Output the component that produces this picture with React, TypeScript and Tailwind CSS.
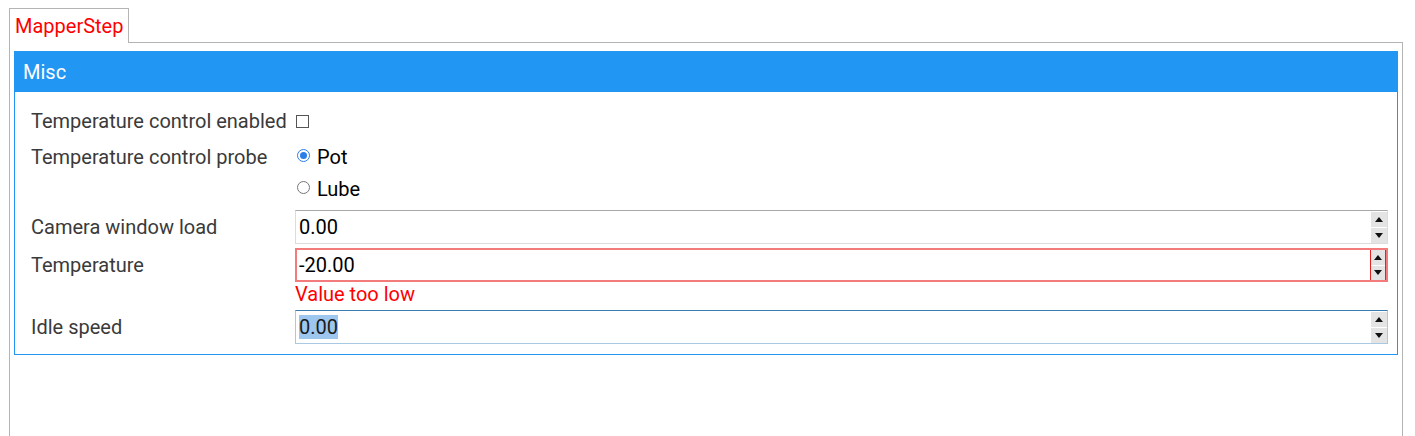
import React from "react";

function Spinner({ invalid }: { invalid?: boolean }) {
    return (
        <div
            className={`flex flex-col justify-center gap-[1px] w-[16px] shrink-0 ${
                invalid ? "border-l border-r border-[#e02424] self-stretch" : ""
            }`}
        >
            <div className="h-[15px] bg-[#e4e4e4] flex items-center justify-center">
                <svg width="8" height="5" viewBox="0 0 8 5">
                    <path d="M0 5 L4 0 L8 5 Z" fill="#111" />
                </svg>
            </div>
            <div className="h-[15px] bg-[#e4e4e4] flex items-center justify-center">
                <svg width="8" height="5" viewBox="0 0 8 5">
                    <path d="M0 0 L8 0 L4 5 Z" fill="#111" />
                </svg>
            </div>
        </div>
    );
}

function NumberField({
    value,
    state,
}: {
    value: string;
    state?: "normal" | "invalid" | "focus";
}) {
    const box =
        state === "invalid"
            ? "border-2 border-[#f47b7b] pl-[2px]"
            : state === "focus"
            ? "border border-[#a9c8e2] border-t-[#3b7cb0] pl-[3px]"
            : "border border-[#dcdcdc] border-t-[#a9a9a9] pl-[3px]";
    return (
        <div className={`flex items-center h-[34px] flex-1 ${box}`}>
            <div className="flex-1 text-[20px] leading-[24px] text-black">
                {state === "focus" ? (
                    <span className="bg-[#9dc7ee] text-[#1a1a1a]">{value}</span>
                ) : (
                    value
                )}
            </div>
            <Spinner invalid={state === "invalid"} />
        </div>
    );
}

export default function App() {
    return (
        <div
            className="pt-[8px] pl-[9px] pr-[12px] bg-white min-h-[436px]"
            style={{ fontFamily: "Roboto, 'Liberation Sans', sans-serif" }}
        >
            <div className="flex">
                <div className="h-[35px] border border-b-0 border-[#b4b4b4] px-[5px] flex items-center text-[20px] text-[#ff0000] bg-white relative z-10 mb-[-1px]">
                    MapperStep
                </div>
            </div>
            <div className="border border-b-0 border-[#b4b4b4] pt-[8px] px-[4px] min-h-[400px]">
                <div className="border border-[#2196f3] border-t-0">
                    <div className="h-[41px] bg-[#2196f3] text-white text-[20px] flex items-center pl-[9px] mx-[-1px]">
                        Misc
                    </div>
                    <div className="pt-[13px] pb-[10px] pl-[16px] pr-[9px] flex flex-col gap-[4px] text-[20px] leading-[24px] text-[#3a3a3a]">
                        <div className="flex items-center h-[32px]">
                            <span className="w-[264px] shrink-0">Temperature control enabled</span>
                            <span className="w-[13px] h-[13px] border border-[#555] ml-[1px] bg-white" />
                        </div>
                        <div className="flex mb-[1px]">
                            <span className="w-[264px] shrink-0 h-[32px] flex items-center">
                                Temperature control probe
                            </span>
                            <div className="flex flex-col text-black">
                                <div className="h-[32px] flex items-center gap-[7px] pl-[2px]">
                                    <span className="w-[13px] h-[13px] rounded-full border-[1.5px] border-[#2b7de9] flex items-center justify-center mt-[-4px]">
                                        <span className="w-[7px] h-[7px] rounded-full bg-[#2b7de9]" />
                                    </span>
                                    <span>Pot</span>
                                </div>
                                <div className="h-[32px] flex items-center gap-[7px] pl-[2px]">
                                    <span className="w-[13px] h-[13px] rounded-full border border-[#767676] mt-[-4px]" />
                                    <span>Lube</span>
                                </div>
                            </div>
                        </div>
                        <div className="flex items-center">
                            <span className="w-[264px] shrink-0">Camera window load</span>
                            <NumberField value="0.00" />
                        </div>
                        <div className="flex flex-col">
                            <div className="flex items-center">
                                <span className="w-[264px] shrink-0">Temperature</span>
                                <NumberField value="-20.00" state="invalid" />
                            </div>
                            <div className="pl-[264px] text-[#ff0000] leading-[24px]">
                                Value too low
                            </div>
                        </div>
                        <div className="flex items-center">
                            <span className="w-[264px] shrink-0">Idle speed</span>
                            <NumberField value="0.00" state="focus" />
                        </div>
                    </div>
                </div>
            </div>
        </div>
    );
}
